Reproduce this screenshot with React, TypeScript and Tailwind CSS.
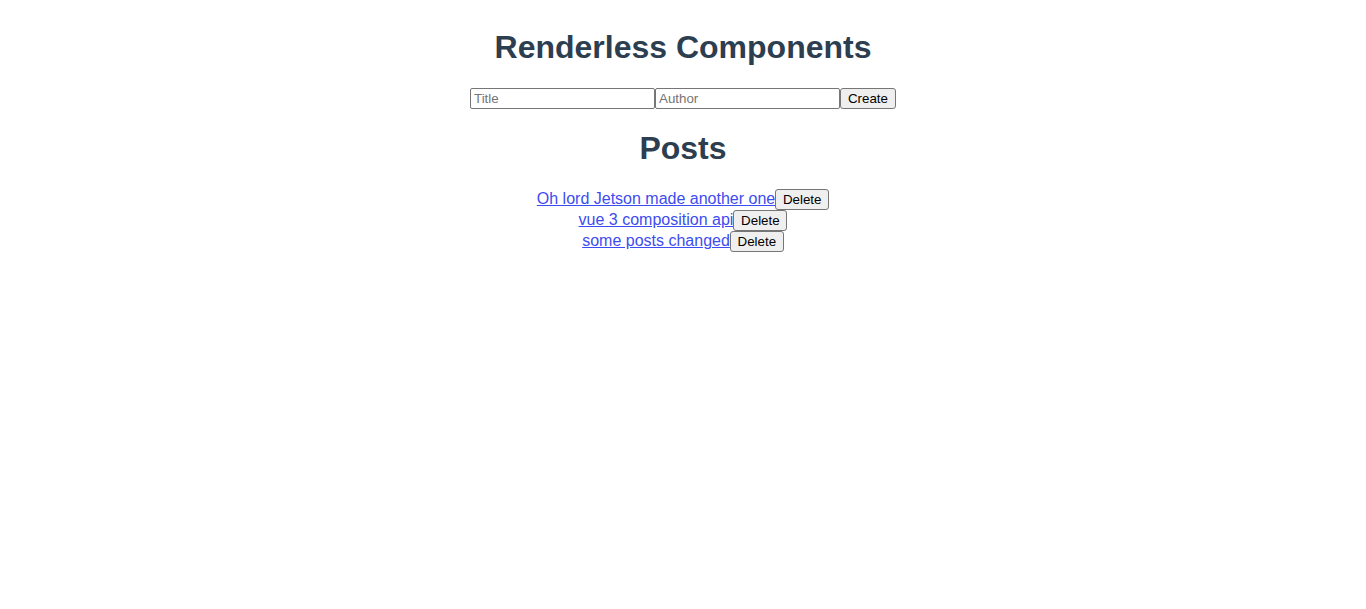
import React, { useState } from "react";

interface Post {
  id: number;
  title: string;
}

const initialPosts: Post[] = [
  { id: 1, title: "Oh lord Jetson made another one" },
  { id: 2, title: "vue 3 composition api" },
  { id: 3, title: "some posts changed" },
];

export default function App() {
  const [posts, setPosts] = useState<Post[]>(initialPosts);
  const [title, setTitle] = useState("");
  const [author, setAuthor] = useState("");

  const create = () => {
    if (!title) return;
    setPosts([...posts, { id: Date.now(), title }]);
    setTitle("");
    setAuthor("");
  };

  return (
    <div className="min-h-screen bg-white pt-[8px] text-center font-['Liberation_Sans',Arial,sans-serif] text-[#2c3e50]">
      <h1 className="mt-[21px] mb-[22px] text-[32px] font-bold leading-[37px]">
        Renderless Components
      </h1>

      <div className="flex justify-center">
        <input
          value={title}
          onChange={(e) => setTitle(e.target.value)}
          placeholder="Title"
          className="h-[21px] w-[185px] rounded-[2px] border border-[#767676] px-[3px] text-[13.33px] text-black placeholder:text-[#757575] outline-none"
        />
        <input
          value={author}
          onChange={(e) => setAuthor(e.target.value)}
          placeholder="Author"
          className="h-[21px] w-[185px] rounded-[2px] border border-[#767676] px-[3px] text-[13.33px] text-black placeholder:text-[#757575] outline-none"
        />
        <button
          onClick={create}
          className="h-[21px] w-[56px] rounded-[3px] border border-[#767676] bg-[#efefef] text-[13.33px] text-black"
        >
          Create
        </button>
      </div>

      <h1 className="mt-[21px] mb-[21px] text-[32px] font-bold leading-[37px]">
        Posts
      </h1>

      <div className="flex flex-col items-center">
        {posts.map((p) => (
          <div key={p.id} className="flex h-[21px] items-center">
            <a href="#" className="text-[16px] leading-[18px] text-[#3d4cf0] underline">
              {p.title}
            </a>
            <button
              onClick={() => setPosts(posts.filter((x) => x.id !== p.id))}
              className="mt-[2px] h-[21px] w-[54px] rounded-[3px] border border-[#767676] bg-[#efefef] text-[13.33px] text-black"
            >
              Delete
            </button>
          </div>
        ))}
      </div>
    </div>
  );
}
